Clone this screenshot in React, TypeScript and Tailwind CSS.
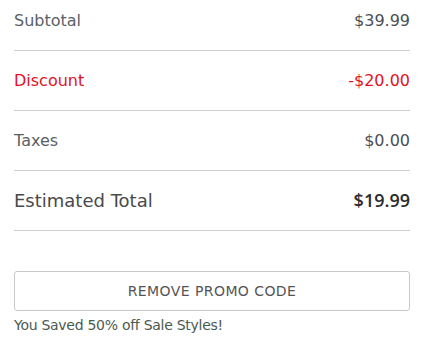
import React from 'react';

type Line = {
  label: string;
  amount: string;
  tone?: 'discount' | 'total';
};

const lines: Line[] = [
  { label: 'Subtotal', amount: '$39.99' },
  { label: 'Discount', amount: '-$20.00', tone: 'discount' },
  { label: 'Taxes', amount: '$0.00' },
  { label: 'Estimated Total', amount: '$19.99', tone: 'total' },
];

const App: React.FC = () => {
  return (
    <div className="h-[350px] w-[432px] overflow-hidden bg-white font-['DejaVu_Sans',sans-serif]">
      <div className="-mt-[9px] px-[14px] pr-[22px]">
        {lines.map((line, key) => (
          <div
            key={key}
            className="flex h-[60px] items-center justify-between border-b border-[#cfcfcf]"
          >
            <span
              className={
                line.tone === 'discount'
                  ? 'text-[16px] text-[#e3121c]'
                  : line.tone === 'total'
                    ? 'text-[18px] text-[#4a4a4a]'
                    : 'text-[16px] text-[#5a5f66]'
              }
            >
              {line.label}
            </span>
            <span
              className={
                line.tone === 'discount'
                  ? 'text-[16px] text-[#e3121c]'
                  : line.tone === 'total'
                    ? "font-['Open_Sans',sans-serif] text-[18px] font-semibold text-[#2b2b2b]"
                    : 'text-[16px] text-[#4a4f56]'
              }
            >
              {line.amount}
            </span>
          </div>
        ))}

        <button className="mt-[40px] flex h-[40px] w-full items-center justify-center rounded-[3px] border border-[#c8c8c8] bg-white text-[14px] tracking-[0.03em] text-[#555]">
          REMOVE PROMO CODE
        </button>
        <p className="mt-[5px] text-[14px] leading-[18px] tracking-[-0.02em] text-[#4b5a4f]">
          You Saved 50% off Sale Styles!
        </p>
      </div>
    </div>
  );
};

export default App;
